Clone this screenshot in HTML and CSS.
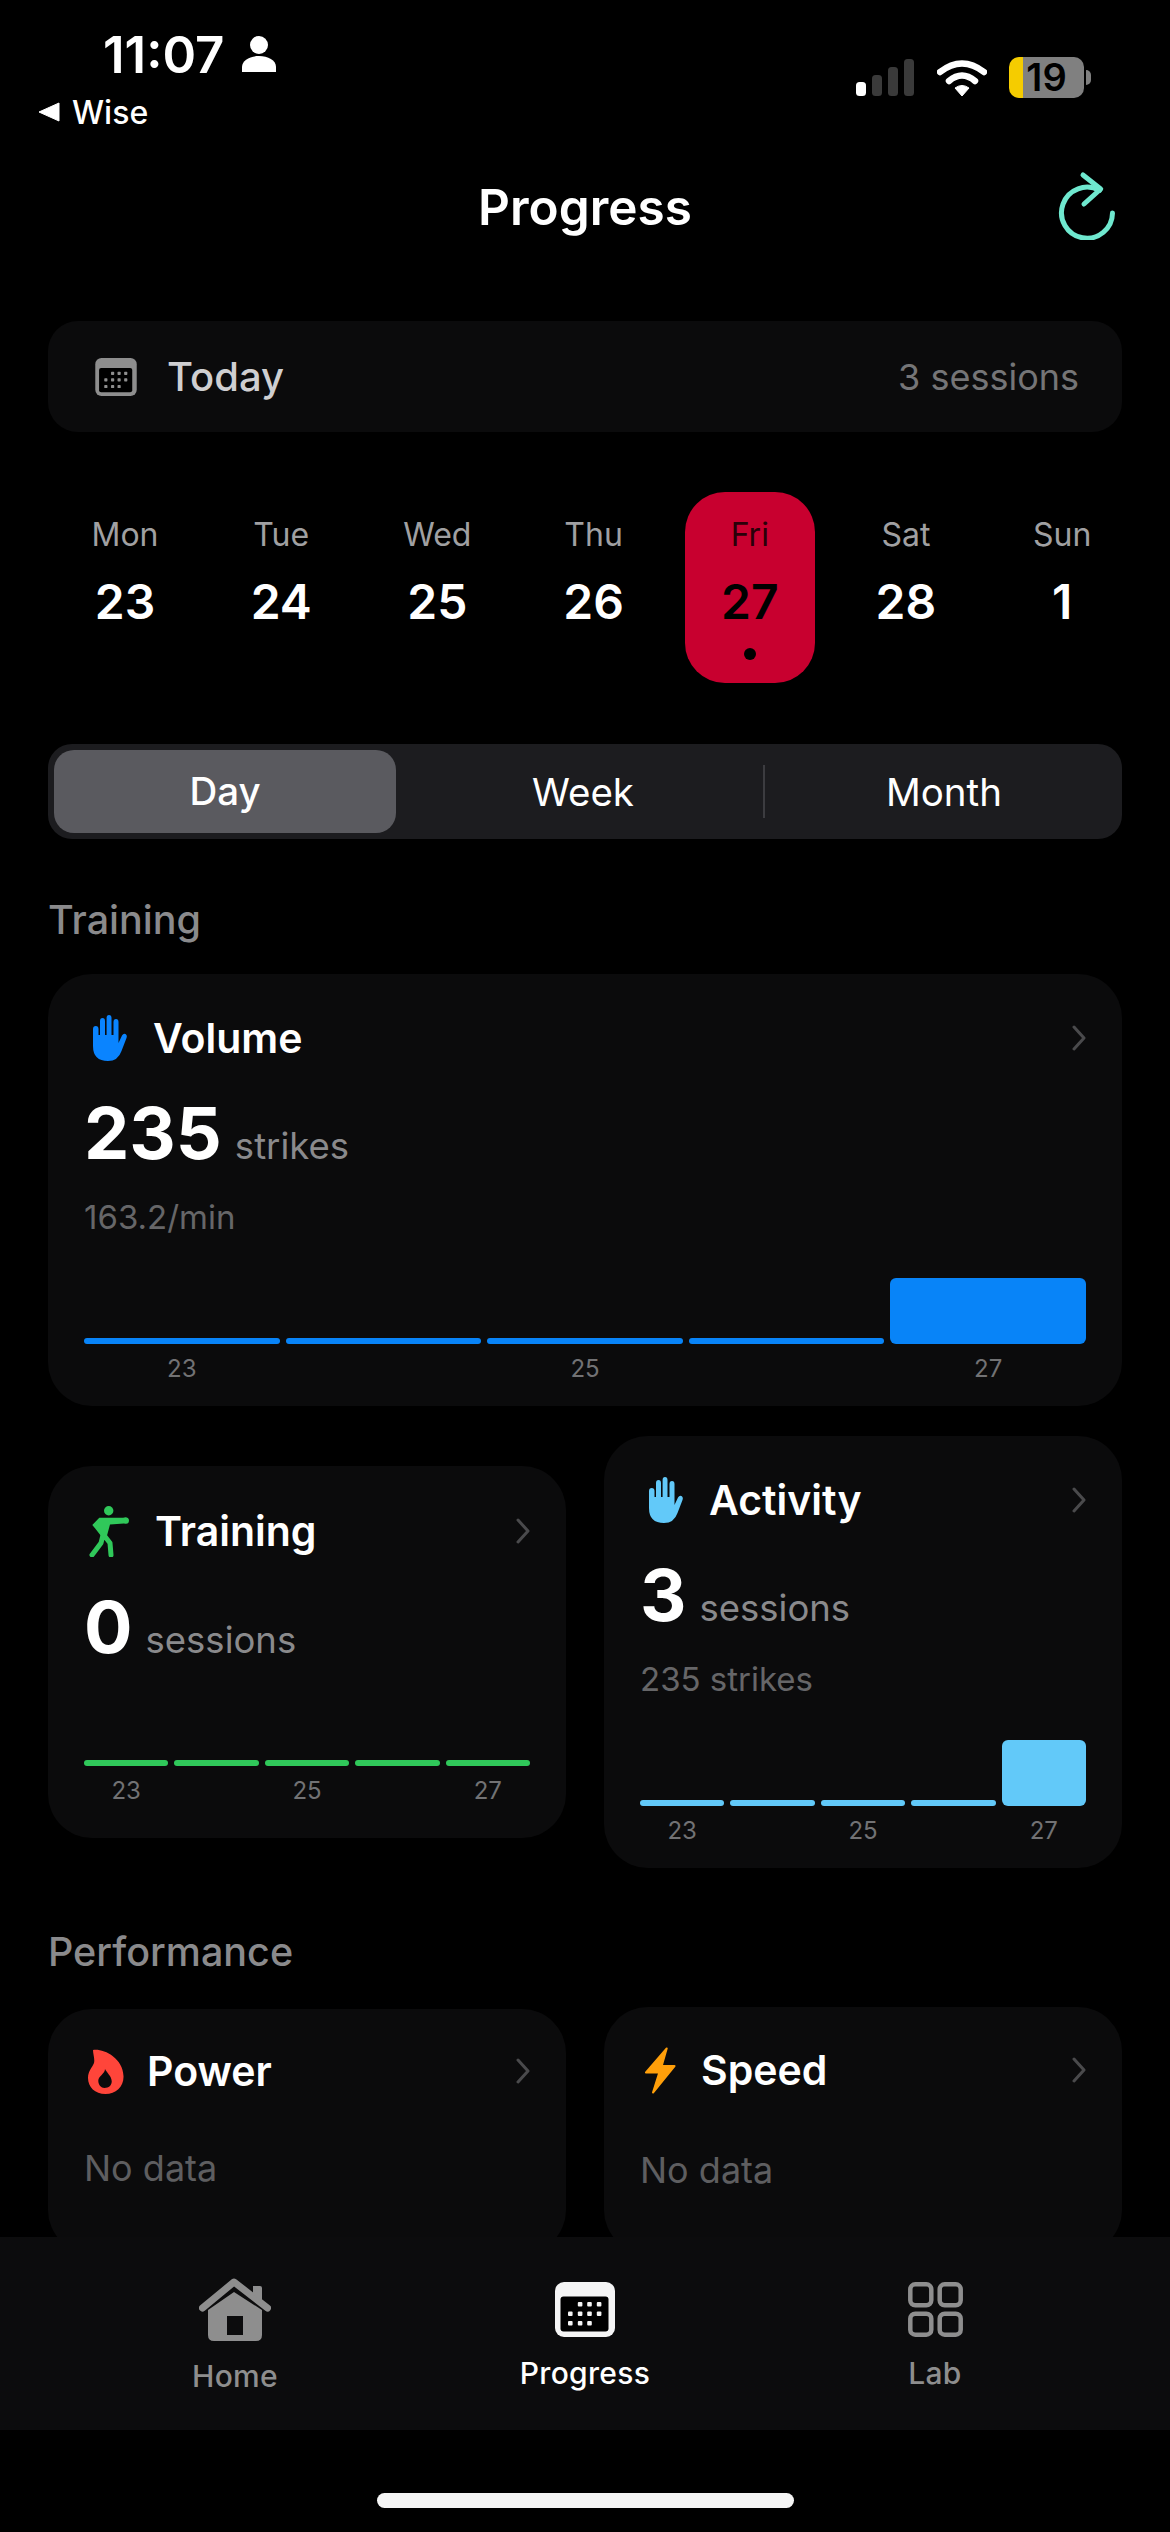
FILE: index.html
```html
<!DOCTYPE html>
<html>
<head>
<meta charset="utf-8">
<title>Progress</title>
<link rel="stylesheet" href="styles.css">
</head>
<body>
<svg class="sprite" width="0" height="0">
	<symbol id="hand" viewBox="0 0 34 46">
		<path d="M0 14 Q0 11 2.8 11 Q5.5 11 5.5 14 V20 H7 V6 Q7 3 9.5 3 Q12 3 12 6 V20 H13.6 V3 Q13.6 0 16 0 Q18.5 0 18.5 3 V20 H20.5 V7 Q20.5 4 23 4 Q25.5 4 25.5 7 V28 L29 20.5 Q30.5 18 32.5 19 Q34.5 20 33.5 23 L28.5 36 Q25 46 15 46 Q0 46 0 31 Z"/>
	</symbol>
	<symbol id="chevron" viewBox="0 0 14 26">
		<path d="M2 2 L12 13 L2 24" fill="none" stroke="#4a4a4c" stroke-width="3" stroke-linecap="round" stroke-linejoin="round"/>
	</symbol>
	<symbol id="calendar" viewBox="0 0 60 55">
		<rect width="60" height="55" rx="9" fill="currentColor"/>
		<rect x="5.5" y="14.5" width="48" height="35" rx="3" fill="#000"/>
		<g fill="currentColor">
			<rect x="22.8" y="20" width="4.6" height="4.6" rx="1"/>
			<rect x="32.2" y="20" width="4.6" height="4.6" rx="1"/>
			<rect x="41.8" y="20" width="4.6" height="4.6" rx="1"/>
			<rect x="13" y="29.4" width="4.6" height="4.6" rx="1"/>
			<rect x="22.8" y="29.4" width="4.6" height="4.6" rx="1"/>
			<rect x="32.2" y="29.4" width="4.6" height="4.6" rx="1"/>
			<rect x="41.8" y="29.4" width="4.6" height="4.6" rx="1"/>
			<rect x="13" y="39" width="4.6" height="4.6" rx="1"/>
			<rect x="22.8" y="39" width="4.6" height="4.6" rx="1"/>
			<rect x="32.2" y="39" width="4.6" height="4.6" rx="1"/>
		</g>
	</symbol>
</svg>

<div class="page">
	<div class="status">
		<div class="status-left">
			<div class="clock">
				<span>11:07</span>
				<svg class="person" viewBox="0 0 34 36">
					<circle cx="17" cy="9" r="9" fill="#fff"/>
					<path d="M0 36 V31 C0 24 8 20 17 20 C26 20 34 24 34 31 V36 Z" fill="#fff"/>
				</svg>
			</div>
			<div class="back">
				<svg class="back-arrow" viewBox="0 0 22 20"><path d="M21 1 V19 L1 10 Z" fill="#fff" stroke="#fff" stroke-linejoin="round"/></svg>
				<span>Wise</span>
			</div>
		</div>
		<div class="status-right">
			<svg class="signal" viewBox="0 0 58 37">
				<rect x="0" y="23" width="10" height="14" rx="3.5" fill="#fff"/>
				<rect x="16" y="16" width="10" height="21" rx="3.5" fill="#3a3a3a"/>
				<rect x="32" y="8" width="10" height="29" rx="3.5" fill="#3a3a3a"/>
				<rect x="48" y="0" width="10" height="37" rx="3.5" fill="#3a3a3a"/>
			</svg>
			<svg class="wifi" viewBox="0 0 50 37">
				<path d="M3 13 Q25 -4 47 13" fill="none" stroke="#fff" stroke-width="6.5" stroke-linecap="round"/>
				<path d="M12 22 Q25 11 38 22" fill="none" stroke="#fff" stroke-width="6.5" stroke-linecap="round"/>
				<path d="M25 37 L18 29 Q25 24 32 29 Z" fill="#fff" stroke="#fff" stroke-linejoin="round"/>
			</svg>
			<div class="battery"><span>19</span></div>
		</div>
	</div>

	<div class="nav">
		<div class="nav-title">Progress</div>
		<svg class="refresh" viewBox="0 0 62 70">
			<path d="M55.5 43 A25.5 25.5 0 1 1 42.5 20.5" fill="none" stroke="#6fe8cf" stroke-width="5" stroke-linecap="round"/>
			<path d="M26 5 L43.7 19 L27 34" fill="none" stroke="#6fe8cf" stroke-width="5" stroke-linecap="round" stroke-linejoin="round"/>
		</svg>
	</div>

	<div class="main">
		<div class="today">
			<svg class="today-icon"><use href="#calendar"/></svg>
			<span class="today-label">Today</span>
			<span class="today-count">3 sessions</span>
		</div>

		<div class="week">
			<div class="day"><span class="day-name">Mon</span><span class="day-num">23</span></div>
			<div class="day"><span class="day-name">Tue</span><span class="day-num">24</span></div>
			<div class="day"><span class="day-name">Wed</span><span class="day-num">25</span></div>
			<div class="day"><span class="day-name">Thu</span><span class="day-num">26</span></div>
			<div class="day day-on"><span class="day-name">Fri</span><span class="day-num">27</span><span class="day-dot"></span></div>
			<div class="day"><span class="day-name">Sat</span><span class="day-num">28</span></div>
			<div class="day"><span class="day-name">Sun</span><span class="day-num">1</span></div>
		</div>

		<div class="seg">
			<div class="seg-day">Day</div>
			<div class="seg-week">Week</div>
			<div class="seg-line"></div>
			<div class="seg-month">Month</div>
		</div>

		<div class="section">Training</div>

		<div class="card blue">
			<div class="card-head">
				<svg class="icon-hand"><use href="#hand"/></svg>
				<span class="card-title">Volume</span>
				<svg class="chevron"><use href="#chevron"/></svg>
			</div>
			<div class="value"><span class="value-num">235</span><span class="value-unit">strikes</span></div>
			<div class="sub">163.2/min</div>
			<div class="bars">
				<div class="bar"></div><div class="bar"></div><div class="bar"></div><div class="bar"></div><div class="bar peak"></div>
			</div>
			<div class="ticks"><span>23</span><span></span><span>25</span><span></span><span>27</span></div>
		</div>

		<div class="row row-training">
			<div class="card green">
				<div class="card-head">
					<svg class="icon-figure" viewBox="0 0 44 52">
						<circle cx="20.7" cy="5.7" r="4.7"/>
						<path d="M4.3 20 L11.3 12.7 H35 Q40 11 41 15 Q41 20 36 18.5 L22 19.5 L18.7 31.7 H13.7 L7 23.3 Z"/>
						<path d="M15 30 L13 38 L4 50 M15 29 L22 38 L23 50" fill="none" stroke="#30c85a" stroke-width="5" stroke-linecap="round" stroke-linejoin="round"/>
					</svg>
					<span class="card-title">Training</span>
					<svg class="chevron"><use href="#chevron"/></svg>
				</div>
				<div class="value"><span class="value-num">0</span><span class="value-unit">sessions</span></div>
				<div class="bars bars-tall">
					<div class="bar"></div><div class="bar"></div><div class="bar"></div><div class="bar"></div><div class="bar"></div>
				</div>
				<div class="ticks"><span>23</span><span></span><span>25</span><span></span><span>27</span></div>
			</div>

			<div class="card sky">
				<div class="card-head">
					<svg class="icon-hand"><use href="#hand"/></svg>
					<span class="card-title">Activity</span>
					<svg class="chevron"><use href="#chevron"/></svg>
				</div>
				<div class="value"><span class="value-num">3</span><span class="value-unit">sessions</span></div>
				<div class="sub">235 strikes</div>
				<div class="bars">
					<div class="bar"></div><div class="bar"></div><div class="bar"></div><div class="bar"></div><div class="bar peak"></div>
				</div>
				<div class="ticks"><span>23</span><span></span><span>25</span><span></span><span>27</span></div>
			</div>
		</div>

		<div class="section section-perf">Performance</div>

		<div class="row row-perf">
			<div class="card card-power">
				<div class="card-head">
					<svg class="icon-flame" viewBox="0 0 36 45">
						<path fill-rule="evenodd" d="M5 1 C14 -1 35 8 35.5 27 C36 37 28 45 17.5 45 C7 45 0 38 0 29 C0 22 4 19 6 14 C7 10 5 5 5 1 Z M17 20 C17 25 10 27 10.3 32 C10.5 36 13 39 16.5 39 C21 39 24 36 23.7 32 C23.4 27 19 24 17 20 Z"/>
					</svg>
					<span class="card-title">Power</span>
					<svg class="chevron"><use href="#chevron"/></svg>
				</div>
				<div class="nodata">No data</div>
			</div>
			<div class="card card-speed">
				<div class="card-head">
					<svg class="icon-bolt" viewBox="0 0 31 47">
						<path d="M21.7 1.5 L1 25.5 H14.3 L8 45.5 L29.5 19 H16.7 Z" stroke="#ff9f0a" stroke-width="2" stroke-linejoin="round"/>
					</svg>
					<span class="card-title">Speed</span>
					<svg class="chevron"><use href="#chevron"/></svg>
				</div>
				<div class="nodata">No data</div>
			</div>
		</div>
	</div>

	<div class="tabs">
		<div class="tab tab-home">
			<svg class="tab-house" viewBox="0 0 72 64">
				<path d="M9 32 L35 14 L63 32 V57 Q63 63 57 63 H15 Q9 63 9 57 Z M28 38 V57 H44 V38 Z" fill="#8e8e8e" fill-rule="evenodd"/>
				<path d="M3.5 30 L35 4 L68.5 30" fill="none" stroke="#8e8e8e" stroke-width="7" stroke-linecap="round" stroke-linejoin="round"/>
				<path d="M54 8 H61 Q63 8 63 10 V24 L54 17 Z" fill="#8e8e8e"/>
			</svg>
			<span>Home</span>
		</div>
		<div class="tab tab-on">
			<svg class="tab-cal"><use href="#calendar"/></svg>
			<span>Progress</span>
		</div>
		<div class="tab">
			<svg class="tab-grid" viewBox="0 0 55 55">
				<g fill="none" stroke="#8e8e8e" stroke-width="4.5">
					<rect x="2.3" y="2.3" width="21" height="21" rx="5"/>
					<rect x="31.7" y="2.3" width="21" height="21" rx="5"/>
					<rect x="2.3" y="31.7" width="21" height="21" rx="5"/>
					<rect x="31.7" y="31.7" width="21" height="21" rx="5"/>
				</g>
			</svg>
			<span>Lab</span>
		</div>
	</div>

	<div class="home-zone"><div class="home-bar"></div></div>
</div>
</body>
</html>
```

FILE: styles.css
```css
body {
	margin: 0;
	background: #000;
	font-family: "Inter", "Liberation Sans", sans-serif;
	color: #fff;
}
.sprite {
	position: absolute;
}
.page {
	width: 1170px;
	height: 2532px;
	display: flex;
	flex-direction: column;
	overflow: hidden;
}

/* status bar */
.status {
	height: 160px;
	flex: none;
	display: flex;
	justify-content: space-between;
	box-sizing: border-box;
}
.status-left {
	padding: 26px 0 0 38px;
}
.clock {
	display: flex;
	align-items: center;
	gap: 18px;
	padding-left: 65px;
	height: 56px;
	font-size: 51px;
	font-weight: 600;
}
.person {
	width: 34px;
	height: 36px;
}
.back {
	display: flex;
	align-items: center;
	gap: 12px;
	height: 40px;
	margin-top: 10px;
	font-size: 32px;
	font-weight: 500;
}
.back-arrow {
	width: 22px;
	height: 20px;
}
.status-right {
	display: flex;
	align-items: flex-start;
	padding: 57px 86px 0 0;
}
.signal {
	width: 58px;
	height: 37px;
	margin-top: 2px;
}
.wifi {
	width: 50px;
	height: 37px;
	margin: 2px 22px 0 23px;
}
.battery {
	position: relative;
	width: 75px;
	height: 41px;
	border-radius: 10px;
	background: linear-gradient(90deg, #f5cc00 14px, #808080 14px);
	color: #000;
	font-size: 38px;
	font-weight: 600;
	line-height: 41px;
	text-align: center;
}
.battery:after {
	content: "";
	position: absolute;
	left: 77px;
	top: 13px;
	width: 5px;
	height: 15px;
	border-radius: 0 8px 8px 0;
	background: #808080;
}

/* header */
.nav {
	height: 94px;
	padding-bottom: 2px;
	flex: none;
	display: flex;
	align-items: center;
	justify-content: center;
	position: relative;
}
.nav-title {
	font-size: 49.5px;
	font-weight: 600;
}
.refresh {
	position: absolute;
	left: 1057px;
	top: 10px;
	width: 62px;
	height: 70px;
}

.main {
	flex: 1;
	min-height: 0;
	overflow: hidden;
	padding: 65px 48px 0;
}

/* today strip */
.today {
	height: 111px;
	display: flex;
	align-items: center;
	box-sizing: border-box;
	padding: 0 43px 0 47px;
	background: #0b0b0c;
	border-radius: 30px;
}
.today-icon {
	width: 42px;
	height: 38px;
	color: #8e8e8e;
	margin-right: 30px;
}
.today-label {
	font-size: 40px;
	font-weight: 450;
	color: #cfcfd1;
}
.today-count {
	margin-left: auto;
	font-size: 36px;
	color: #757577;
}

/* week picker */
.week {
	display: grid;
	grid-template-columns: repeat(7, 130px);
	column-gap: 26.2px;
	margin: 60px 0 0 12px;
}
.day {
	height: 191px;
	display: flex;
	flex-direction: column;
	align-items: center;
	padding-top: 23px;
	box-sizing: border-box;
	border-radius: 40px;
}
.day-on {
	background: #c8002f;
}
.day-name {
	font-size: 32px;
	line-height: 40px;
	color: #a0a0a2;
}
.day-num {
	font-size: 48px;
	font-weight: 600;
	line-height: 52px;
	margin-top: 21px;
}
.day-on .day-name {
	color: #2a0009;
}
.day-on .day-num {
	color: #000;
}
.day-dot {
	width: 12px;
	height: 12px;
	margin-top: 20px;
	border-radius: 50%;
	background: #000;
}

/* day / week / month switch */
.seg {
	height: 95px;
	margin-top: 61px;
	padding: 6px;
	display: flex;
	align-items: center;
	box-sizing: border-box;
	background: #1c1c1f;
	border-radius: 24px;
	font-size: 38.5px;
	font-weight: 400;
	text-align: center;
}
.seg-day {
	width: 342px;
	height: 83px;
	line-height: 83px;
	font-weight: 500;
	background: #5a5a5f;
	border-radius: 20px;
}
.seg-week {
	width: 360px;
	padding-left: 7px;
}
.seg-line {
	width: 2px;
	height: 53px;
	background: #3c3c40;
}
.seg-month {
	flex: 1;
	padding-left: 7px;
}

.section {
	margin-top: 58px;
	font-size: 39.5px;
	font-weight: 500;
	line-height: 46px;
	color: #8a8a8c;
}
.section-perf {
	margin-top: 61px;
}

/* metric cards */
.card {
	margin-top: 31px;
	padding: 39px 36px 22px;
	background: #0b0b0c;
	border-radius: 44px;
}
.card-head {
	display: flex;
	align-items: center;
}
.card-title {
	font-size: 41px;
	font-weight: 600;
}
.chevron {
	width: 14px;
	height: 26px;
	margin-left: auto;
}
.icon-hand {
	width: 34px;
	height: 46px;
	margin: 0 26px 0 9px;
}
.icon-figure {
	width: 44px;
	height: 52px;
	margin: 0 23px 0 4px;
	fill: #30c85a;
}
.icon-flame {
	width: 36px;
	height: 45px;
	margin: 0 23px 0 4px;
	fill: #ff453a;
}
.icon-bolt {
	width: 31px;
	height: 47px;
	margin: 0 25px 0 5px;
	fill: #ff9f0a;
}
.value {
	display: flex;
	align-items: baseline;
	margin-top: 32px;
	height: 76px;
}
.value-num {
	font-size: 72px;
	font-weight: 700;
	line-height: 76px;
}
.value-unit {
	margin-left: 13px;
	font-size: 36.5px;
	color: #8a8a8c;
}
.sub {
	margin-top: 26px;
	font-size: 33px;
	line-height: 40px;
	color: #666668;
}
.bars {
	display: grid;
	grid-template-columns: repeat(5, 1fr);
	column-gap: 6px;
	align-items: end;
	height: 66px;
	margin-top: 41px;
}
.bars-tall {
	margin-top: 35px;
}
.bar {
	height: 6px;
	border-radius: 3px;
}
.peak {
	height: 66px;
	border-radius: 6px;
}
.blue .icon-hand { fill: #0a84ff; }
.blue .bar { background: #0884f8; }
.green { padding-bottom: 32px; }
.green .bar { background: #30c85a; }
.sky .icon-hand { fill: #62c9f9; }
.sky .bar { background: #62c9f9; }
.ticks {
	display: grid;
	grid-template-columns: repeat(5, 1fr);
	column-gap: 6px;
	margin-top: 10px;
	font-size: 24px;
	line-height: 30px;
	color: #727274;
	text-align: center;
}

.row {
	display: grid;
	grid-template-columns: 518px 518px;
	column-gap: 38px;
	align-items: center;
	margin-top: 30px;
}
.row .card {
	margin-top: 0;
}
.row-perf {
	margin-top: 32px;
	align-items: start;
}
.nodata {
	margin-top: 50px;
	font-size: 36px;
	line-height: 44px;
	color: #5e5e60;
}
.row .card-power {
	margin-top: 2px;
	padding-top: 37px;
	height: 245px;
	box-sizing: border-box;
}
.card-speed {
	padding-top: 38px;
	height: 247px;
	box-sizing: border-box;
}
.card-speed .nodata {
	margin-top: 53px;
}

/* bottom tabs */
.tabs {
	height: 193px;
	flex: none;
	display: flex;
	padding: 0 60px;
	box-sizing: border-box;
	background: #0c0c0d;
	position: relative;
}
.tab {
	flex: 1;
	display: flex;
	flex-direction: column;
	align-items: center;
	gap: 18px;
	padding-top: 45px;
	font-size: 30px;
	font-weight: 450;
	letter-spacing: 0.3px;
	line-height: 36px;
	color: #8e8e8e;
}
.tab-home {
	padding-top: 41px;
	gap: 16px;
}
.tab-on {
	color: #fff;
}
.tab-house {
	width: 72px;
	height: 64px;
}
.tab-cal {
	width: 60px;
	height: 55px;
	color: #f5f5f5;
}
.tab-grid {
	width: 55px;
	height: 55px;
}
.home-zone {
	height: 102px;
	flex: none;
	display: flex;
	justify-content: center;
	padding-top: 63px;
	box-sizing: border-box;
}
.home-bar {
	width: 417px;
	height: 15px;
	border-radius: 8px;
	background: #f5f5f5;
}
```
